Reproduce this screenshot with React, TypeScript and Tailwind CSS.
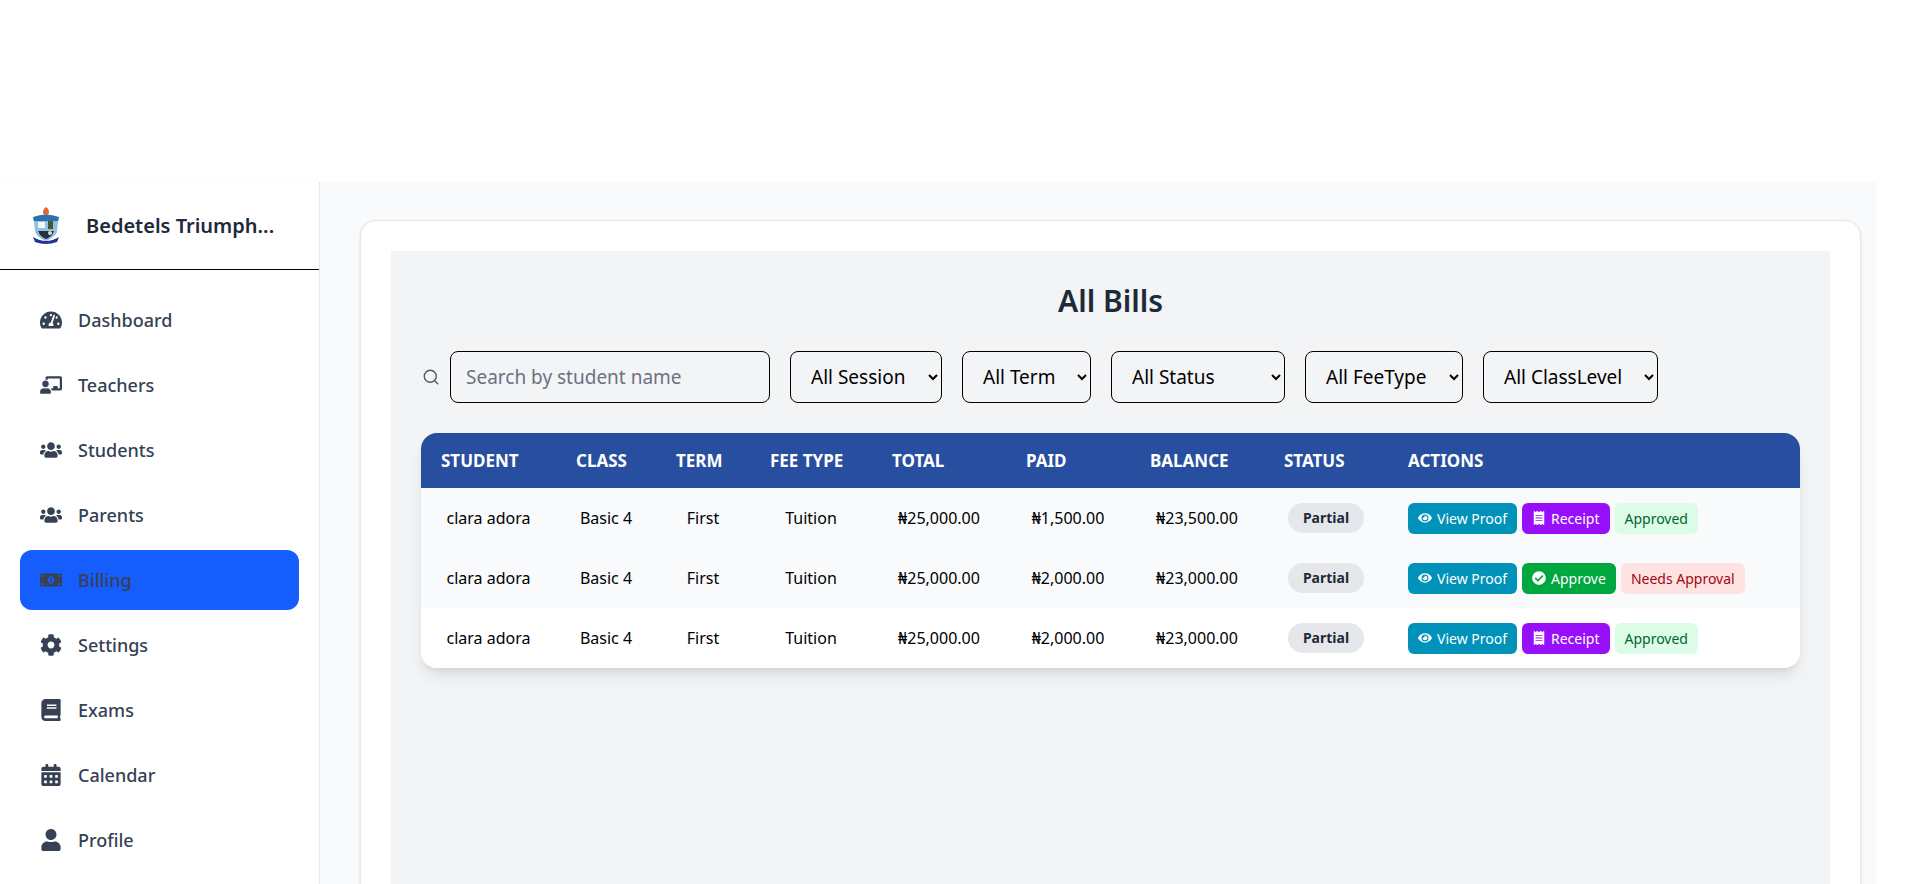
import { FaTachometerAlt, FaChalkboardTeacher, FaUsers, FaMoneyBillAlt, FaCog, FaBook, FaCalendarAlt, FaUser, FaEye, FaReceipt, FaCheckCircle } from "react-icons/fa";
import { Search } from "lucide-react";

const nav = [
  { label: "Dashboard", Icon: FaTachometerAlt },
  { label: "Teachers", Icon: FaChalkboardTeacher },
  { label: "Students", Icon: FaUsers },
  { label: "Parents", Icon: FaUsers },
  { label: "Billing", Icon: FaMoneyBillAlt, active: true },
  { label: "Settings", Icon: FaCog },
  { label: "Exams", Icon: FaBook },
  { label: "Calendar", Icon: FaCalendarAlt },
  { label: "Profile", Icon: FaUser },
];

const rows = [
  { paid: "₦1,500.00", balance: "₦23,500.00", approved: true, bg: "bg-[#f9fafb]" },
  { paid: "₦2,000.00", balance: "₦23,000.00", approved: false, bg: "bg-[#f9fafb]" },
  { paid: "₦2,000.00", balance: "₦23,000.00", approved: true, bg: "bg-white" },
];

const headers = [
  { t: "Student", w: "w-[135px]" },
  { t: "Class", w: "w-[100px]" },
  { t: "Term", w: "w-[94px]" },
  { t: "Fee Type", w: "w-[122px]" },
  { t: "Total", w: "w-[134px]" },
  { t: "Paid", w: "w-[124px]" },
  { t: "Balance", w: "w-[134px]" },
  { t: "Status", w: "w-[124px]" },
  { t: "Actions", w: "w-[412px]" },
];

const selects = [
  { t: "All Session", w: "w-[152px]" },
  { t: "All Term", w: "w-[129px]" },
  { t: "All Status", w: "w-[174px]" },
  { t: "All FeeType", w: "w-[158px]" },
  { t: "All ClassLevel", w: "w-[175px]" },
];

function Logo() {
  return (
    <svg viewBox="0 0 32 38" className="w-[32px] h-[38px]">
      <path d="M16 0c2 2 3 3 3 5s-1 3-3 3-3-1-3-3 1-3 3-5z" fill="#e8622c" />
      <path d="M3 10 Q16 5 29 10 L28 15 H4z" fill="#2f6fb0" />
      <path d="M4 14 H28 L27 25 Q24 31 16 34 Q8 31 5 25z" fill="#8fc3e0" />
      <rect x="8" y="15" width="7" height="6" fill="#f4f6f2" />
      <rect x="18" y="14" width="5" height="8" fill="#3d5a3f" />
      <path d="M8 24 H24 L22 28 Q19 31 16 32 Q13 31 10 28z" fill="#2b2f45" />
      <circle cx="20" cy="26" r="2" fill="#e9d7c4" />
      <path d="M3 30 Q16 38 29 30 L27 35 Q16 39 5 35z" fill="#27318f" />
    </svg>
  );
}

function Btn({ bg, Icon, children }: { bg: string; Icon: any; children: string }) {
  return (
    <span className={`inline-flex items-center gap-[5px] h-[31px] px-[10px] rounded-[6px] text-white text-[14px] ${bg}`}>
      <Icon className="text-[14px]" />
      {children}
    </span>
  );
}

export default function App() {
  return (
    <div className="h-[884px] overflow-hidden bg-white pt-[182px] pr-[44px] font-['Noto_Sans',sans-serif]">
      <div className="flex h-full">
        <aside className="w-[320px] shrink-0 border-r border-[#e5e7eb] shadow-[1px_0_4px_rgba(0,0,0,0.04)]">
          <div className="h-[88px] border-b border-black flex items-center pl-[30px] gap-[24px]">
            <Logo />
            <span className="text-[20px] font-semibold text-[#1e2939] whitespace-nowrap">Bedetels Triumph...</span>
          </div>
          <nav className="px-[20px] pt-[20px] flex flex-col gap-[5px]">
            {nav.map(({ label, Icon, active }) => (
              <div key={label} className={`h-[60px] flex items-center gap-[16px] pl-[20px] rounded-[12px] text-[18px] font-medium text-[#364153] ${active ? "bg-[#155dfc]" : ""}`}>
                <span className="w-[22px] flex justify-center text-[22px]"><Icon /></span>
                {label}
              </div>
            ))}
          </nav>
        </aside>
        <main className="flex-1 bg-[#f9fafb] pt-[38px] pl-[40px] pr-[15px]">
          <div className="h-[700px] bg-white border border-[#e5e7eb] rounded-[16px] p-[30px] pb-0 shadow-sm">
            <div className="h-full bg-[#f3f4f6] px-[30px] pt-[30px]">
              <h1 className="text-center text-[30px] leading-[40px] font-semibold text-[#1e2939]">All Bills</h1>
              <div className="mt-[30px] flex items-center">
                <Search className="w-[18px] h-[18px] text-[#4a5565] mr-[10px] ml-[1px]" strokeWidth={1.75} />
                <input placeholder="Search by student name" className="w-[320px] h-[52px] border border-black rounded-[8px] px-[15px] text-[19px] placeholder:text-[#6a7282] mr-[20px]" />
                <div className="flex gap-[20px]">
                  {selects.map((s) => (
                    <select key={s.t} className={`${s.w} h-[52px] border border-black rounded-[8px] pl-[16px] pr-[2px] text-[19px] text-black`}>
                      <option>{s.t}</option>
                    </select>
                  ))}
                </div>
              </div>
              <div className="mt-[30px] rounded-[16px] overflow-hidden shadow-lg bg-white">
                <table className="w-full table-fixed border-collapse">
                  <thead>
                    <tr className="h-[55px] bg-[#284ea0] text-white">
                      {headers.map((h) => (
                        <th key={h.t} className={`${h.w} px-[20px] text-left text-[17px] font-bold uppercase whitespace-nowrap`}>{h.t}</th>
                      ))}
                    </tr>
                  </thead>
                  <tbody className="text-[16px] text-black">
                    {rows.map((r, i) => (
                      <tr key={i} className={`h-[60px] text-center ${r.bg}`}>
                        <td>clara adora</td>
                        <td>Basic 4</td>
                        <td>First</td>
                        <td>Tuition</td>
                        <td>₦25,000.00</td>
                        <td>{r.paid}</td>
                        <td>{r.balance}</td>
                        <td>
                          <span className="inline-block h-[30px] leading-[30px] w-[76px] rounded-full bg-[#e5e7eb] text-[#1e2939] text-[14px] font-bold">Partial</span>
                        </td>
                        <td className="px-[20px] text-left">
                          <div className="flex items-center gap-[5px]">
                            <Btn bg="bg-[#0092b8]" Icon={FaEye}>View Proof</Btn>
                            {r.approved ? (
                              <>
                                <Btn bg="bg-[#9810fa]" Icon={FaReceipt}>Receipt</Btn>
                                <span className="h-[31px] px-[10px] rounded-[6px] inline-flex items-center bg-[#dcfce7] text-[#016630] text-[14px]">Approved</span>
                              </>
                            ) : (
                              <>
                                <Btn bg="bg-[#00a63e]" Icon={FaCheckCircle}>Approve</Btn>
                                <span className="h-[31px] px-[10px] rounded-[6px] inline-flex items-center bg-[#ffe2e2] text-[#9f0712] text-[14px]">Needs Approval</span>
                              </>
                            )}
                          </div>
                        </td>
                      </tr>
                    ))}
                  </tbody>
                </table>
              </div>
            </div>
          </div>
        </main>
      </div>
    </div>
  );
}
